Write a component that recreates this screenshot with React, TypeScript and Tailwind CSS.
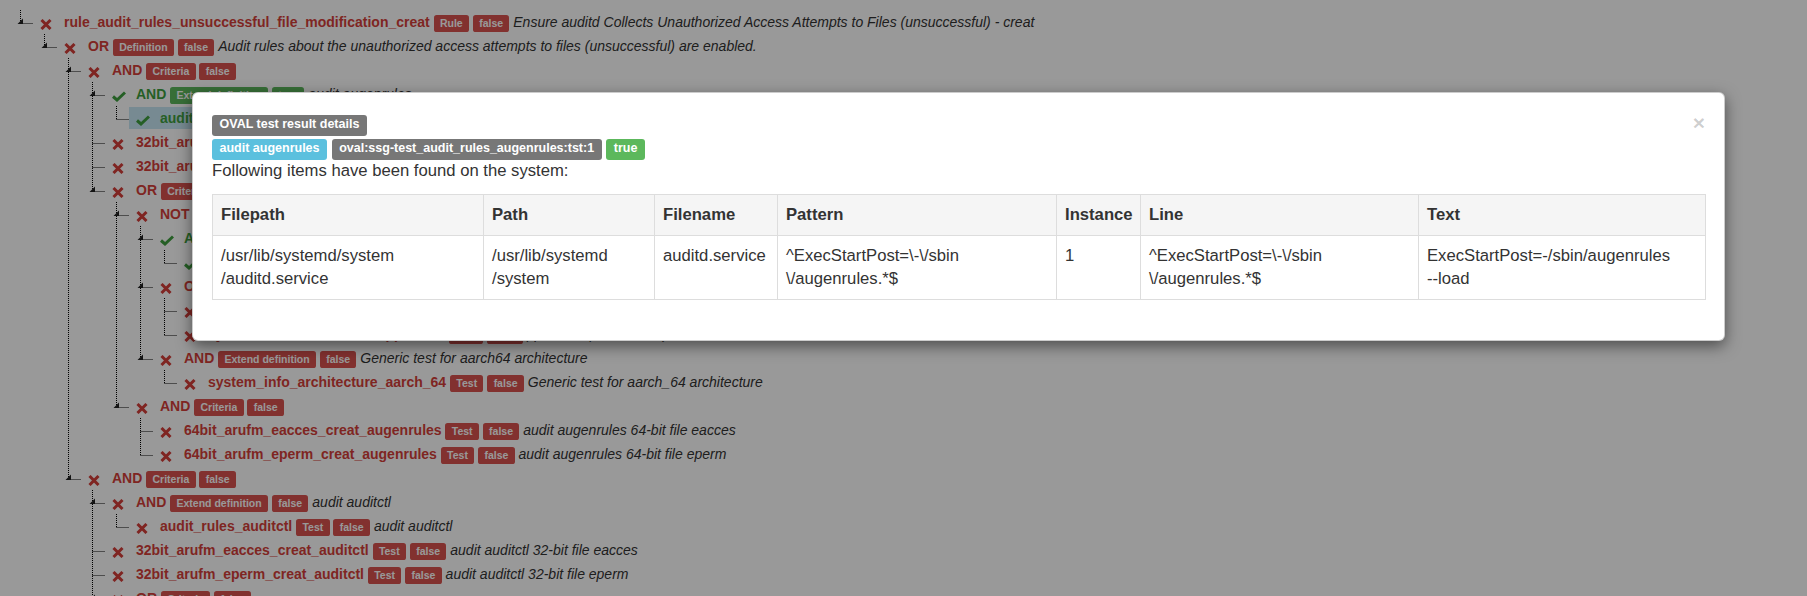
import React from 'react'

type Tone = 'red' | 'green'

type Row = {
  level: number
  ok: boolean
  name: string
  not?: string
  badges: [string, Tone][]
  desc?: string
  active?: boolean
}

const crit: [string, Tone][] = [['Criteria', 'red'], ['false', 'red']]
const testFail: [string, Tone][] = [['Test', 'red'], ['false', 'red']]
const extFail: [string, Tone][] = [['Extend definition', 'red'], ['false', 'red']]

const rows: Row[] = [
  { level: 0, ok: false, name: 'rule_audit_rules_unsuccessful_file_modification_creat', badges: [['Rule', 'red'], ['false', 'red']], desc: 'Ensure auditd Collects Unauthorized Access Attempts to Files (unsuccessful) - creat' },
  { level: 1, ok: false, name: 'OR', badges: [['Definition', 'red'], ['false', 'red']], desc: 'Audit rules about the unauthorized access attempts to files (unsuccessful) are enabled.' },
  { level: 2, ok: false, name: 'AND', badges: crit },
  { level: 3, ok: true, name: 'AND', badges: [['Extend definition', 'green'], ['true', 'green']], desc: 'audit augenrules' },
  { level: 4, ok: true, name: 'audit_rules_augenrules', badges: [['Test', 'green'], ['true', 'green']], desc: 'audit augenrules', active: true },
  { level: 3, ok: false, name: '32bit_arufm_eacces_creat_augenrules', badges: testFail, desc: 'audit augenrules 32-bit file eacces' },
  { level: 3, ok: false, name: '32bit_arufm_eperm_creat_augenrules', badges: testFail, desc: 'audit augenrules 32-bit file eperm' },
  { level: 3, ok: false, name: 'OR', badges: crit },
  { level: 4, ok: false, name: 'NOT', not: 'OR', badges: crit },
  { level: 5, ok: true, name: 'AND', badges: [['Extend definition', 'green'], ['true', 'green']], desc: 'Generic test for x86_64 architecture' },
  { level: 6, ok: true, name: 'system_info_architecture_x86_64', badges: [['Test', 'green'], ['true', 'green']], desc: 'Generic test for x86_64 architecture' },
  { level: 5, ok: false, name: 'OR', badges: extFail, desc: 'Generic test for ppc64 architecture' },
  { level: 6, ok: false, name: 'system_info_architecture_ppc_64', badges: testFail, desc: 'Generic test for ppc_64 architecture' },
  { level: 6, ok: false, name: 'system_info_architecture_ppc_64le', badges: testFail, desc: 'ppc_64le (little endian)' },
  { level: 5, ok: false, name: 'AND', badges: extFail, desc: 'Generic test for aarch64 architecture' },
  { level: 6, ok: false, name: 'system_info_architecture_aarch_64', badges: testFail, desc: 'Generic test for aarch_64 architecture' },
  { level: 4, ok: false, name: 'AND', badges: crit },
  { level: 5, ok: false, name: '64bit_arufm_eacces_creat_augenrules', badges: testFail, desc: 'audit augenrules 64-bit file eacces' },
  { level: 5, ok: false, name: '64bit_arufm_eperm_creat_augenrules', badges: testFail, desc: 'audit augenrules 64-bit file eperm' },
  { level: 2, ok: false, name: 'AND', badges: crit },
  { level: 3, ok: false, name: 'AND', badges: extFail, desc: 'audit auditctl' },
  { level: 4, ok: false, name: 'audit_rules_auditctl', badges: testFail, desc: 'audit auditctl' },
  { level: 3, ok: false, name: '32bit_arufm_eacces_creat_auditctl', badges: testFail, desc: 'audit auditctl 32-bit file eacces' },
  { level: 3, ok: false, name: '32bit_arufm_eperm_creat_auditctl', badges: testFail, desc: 'audit auditctl 32-bit file eperm' },
  { level: 3, ok: false, name: 'OR', badges: crit },
  { level: 4, ok: false, name: 'NOT', not: 'OR', badges: crit },
  { level: 3, ok: false, name: 'AND', badges: crit },
]

function Cross() {
  return (
    <svg width="12" height="11" viewBox="0 0 12 11" className="mt-[8px] shrink-0">
      <path d="M1.5 1 L10.5 10 M10.5 1 L1.5 10" stroke="#d43f3a" strokeWidth="3" fill="none" />
    </svg>
  )
}

function Check() {
  return (
    <svg width="14" height="11" viewBox="0 0 14 11" className="mt-[8px] shrink-0">
      <path d="M1 5.5 L5 9 L13 1.5" stroke="#3f9f3f" strokeWidth="3" fill="none" />
    </svg>
  )
}

function Connector({ level, through, sibling, children }: { level: number; through: boolean[]; sibling: boolean; children: boolean }) {
  const x = 20.5 + level * 24
  return (
    <svg width={33 + level * 24} height="24" className="shrink-0">
      {through.map((on, k) =>
        on ? <line key={k} x1={20.5 + k * 24} x2={20.5 + k * 24} y1={0} y2={24} stroke="#000" strokeDasharray="1 1" /> : null
      )}
      <line x1={x} x2={x} y1={0} y2={sibling ? 24 : 13.5} stroke="#000" strokeDasharray="1 1" />
      <line x1={x} x2={33 + level * 24} y1={13.5} y2={13.5} stroke="#000" strokeDasharray="1 1" />
      {children && <polygon points={`${x + 2.5},8.5 ${x + 2.5},14 ${x - 3},14`} fill="#222" />}
    </svg>
  )
}

function TreeBadge({ text, tone }: { text: string; tone: Tone }) {
  return (
    <span
      className={`${tone === 'red' ? 'bg-[#d9534f]' : 'bg-[#5cb85c]'} text-white font-bold text-[10.5px] leading-none px-[0.6em] pt-[0.2em] pb-[0.3em] rounded-[0.25em]`}
    >
      {text}
    </span>
  )
}

function Label({ color, children }: { color: string; children: React.ReactNode }) {
  return (
    <span className={`${color} inline-block text-white font-bold text-[12.5px] leading-none px-[7.5px] pt-[3.5px] pb-[5.5px] rounded-[3px]`}>
      {children}
    </span>
  )
}

const heads = ['Filepath', 'Path', 'Filename', 'Pattern', 'Instance', 'Line', 'Text']
const widths = ['w-[271px]', 'w-[171px]', 'w-[123px]', 'w-[279px]', 'w-[84px]', 'w-[278px]', 'w-[287px]']
const cells: string[][] = [
  ['/usr/lib/systemd/system', '/auditd.service'],
  ['/usr/lib/systemd', '/system'],
  ['auditd.service'],
  ['^ExecStartPost=\\-\\/sbin', '\\/augenrules.*$'],
  ['1'],
  ['^ExecStartPost=\\-\\/sbin', '\\/augenrules.*$'],
  ['ExecStartPost=-/sbin/augenrules', '--load'],
]

export default function App() {
  const nextAt = (i: number, k: number) => {
    for (let j = i + 1; j < rows.length; j++) {
      if (rows[j].level <= k) return rows[j].level === k
    }
    return false
  }

  return (
    <div className="relative h-[596px] w-full overflow-hidden bg-white font-['Liberation_Sans',Arial,sans-serif] text-[14px]">
      <div className="pt-[10px]">
        {rows.map((r, i) => {
          const through = Array.from({ length: r.level }, (_, k) => nextAt(i, k))
          const children = i + 1 < rows.length && rows[i + 1].level > r.level
          const color = r.ok ? 'text-[#3f9f3f]' : 'text-[#d43f3a]'
          return (
            <div key={i} className="flex h-[24px]">
              <Connector level={r.level} through={through} sibling={nextAt(i, r.level)} children={children} />
              <div className={`mt-[1px] flex h-[22px] pl-[7px] pr-[7px] ${r.active ? 'bg-[#c6e6f4]' : ''}`}>
                <div className="w-[24px] shrink-0">{r.ok ? <Check /> : <Cross />}</div>
                <span className="whitespace-nowrap leading-[22px]">
                  <b className={color}>{r.name}</b>
                  {r.not && (
                    <>
                      {' '}
                      <b className="text-[#3f9f3f]">{r.not}</b>
                    </>
                  )}
                  {r.badges.map(([t, tone], k) => (
                    <React.Fragment key={k}>
                      {' '}
                      <TreeBadge text={t} tone={tone} />
                    </React.Fragment>
                  ))}
                  {r.desc && (
                    <>
                      {' '}
                      <i className="text-[#333]">{r.desc}</i>
                    </>
                  )}
                </span>
              </div>
            </div>
          )
        })}
      </div>

      <div className="absolute inset-0 bg-black/40" />

      <div className="absolute left-[192px] top-[92px] w-[1533px] rounded-[6px] border border-black/20 bg-white px-[19px] pt-[18px] pb-[40px] text-[16.67px] leading-[1.428571] text-[#333] shadow-[0_5px_15px_rgba(0,0,0,0.5)]">
        <span className="float-right mt-[1px] text-[21px] font-bold leading-none text-black/20 [text-shadow:0_1px_0_#fff]">×</span>
        <div className="h-[24px]">
          <Label color="bg-[#777]">OVAL test result details</Label>
        </div>
        <div className="h-[24px]">
          <Label color="bg-[#5bc0de]">audit augenrules</Label>{' '}
          <Label color="bg-[#777]">oval:ssg-test_audit_rules_augenrules:tst:1</Label>{' '}
          <Label color="bg-[#5cb85c]">true</Label>
        </div>
        <p className="mb-[11px]">Following items have been found on the system:</p>
        <table className="w-full table-fixed border-collapse border border-[#ddd]">
          <colgroup>
            {widths.map((w, i) => (
              <col key={i} className={w} />
            ))}
          </colgroup>
          <thead>
            <tr className="bg-[#f5f5f5]">
              {heads.map((h) => (
                <th key={h} className="border border-[#ddd] p-[8px] text-left align-top font-bold">
                  {h}
                </th>
              ))}
            </tr>
          </thead>
          <tbody>
            <tr>
              {cells.map((lines, i) => (
                <td key={i} className="border border-[#ddd] p-[8px] align-top whitespace-nowrap">
                  {lines.map((l, k) => (
                    <div key={k}>{l}</div>
                  ))}
                </td>
              ))}
            </tr>
          </tbody>
        </table>
      </div>
    </div>
  )
}
